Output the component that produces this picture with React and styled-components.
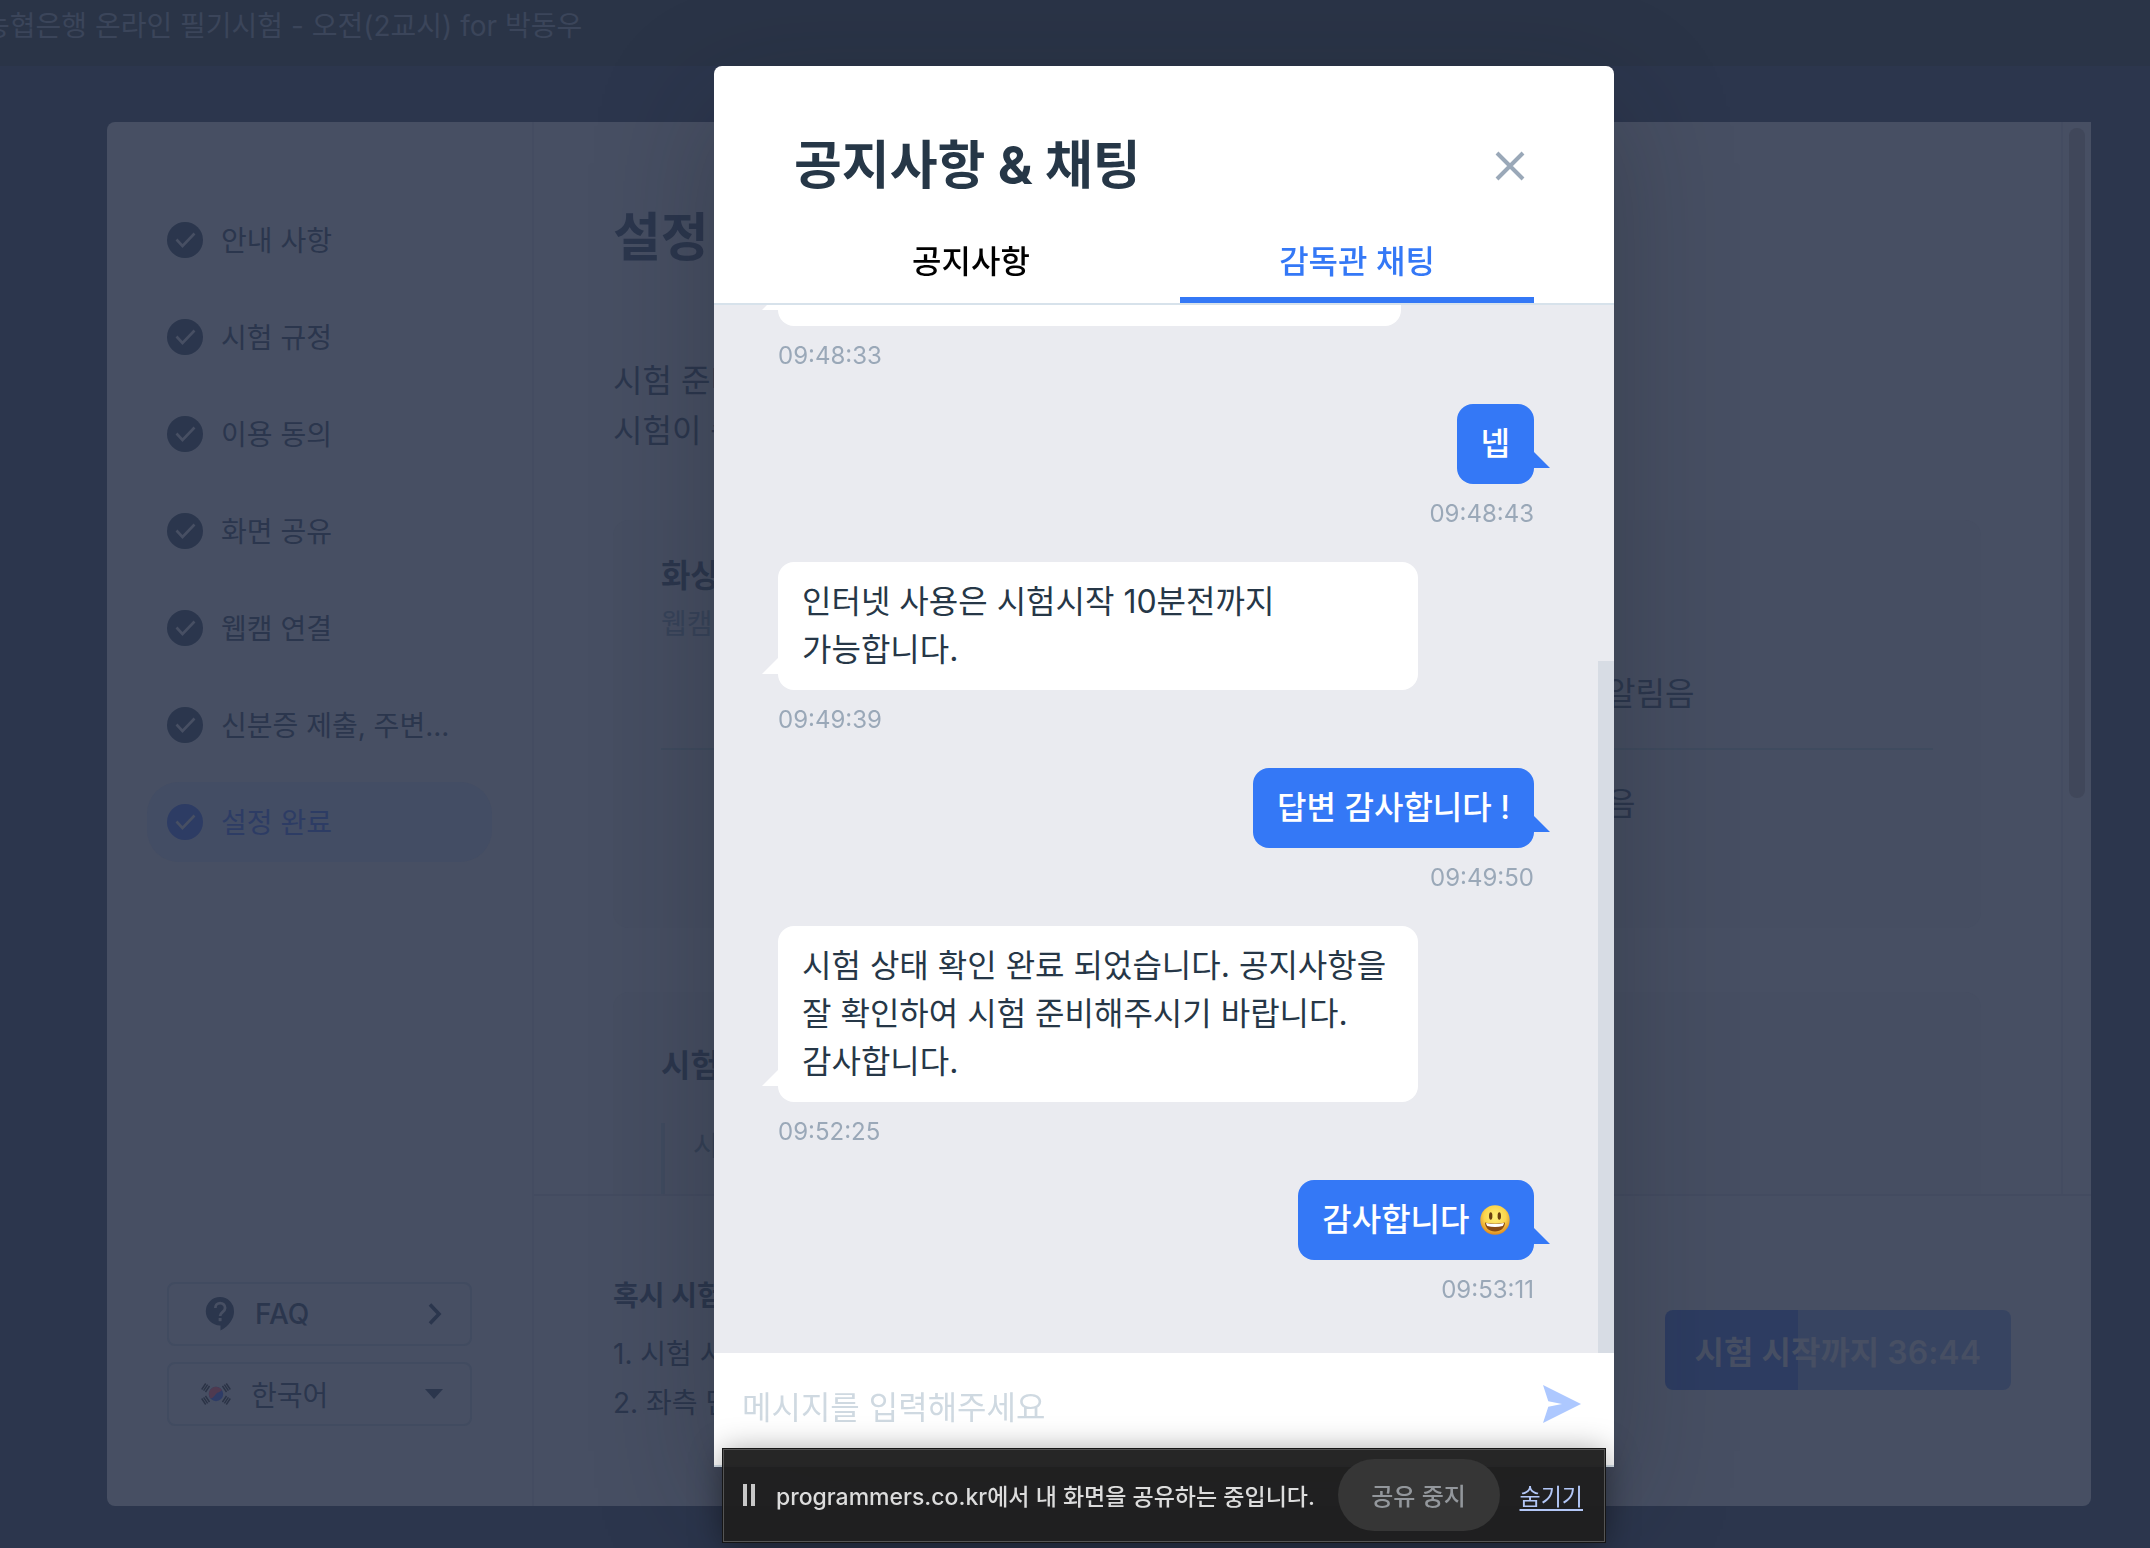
import React, { useState } from "react";
import styled, { createGlobalStyle } from "styled-components";

const steps = [
  "안내 사항",
  "시험 규정",
  "이용 동의",
  "화면 공유",
  "웹캠 연결",
  "신분증 제출, 주변...",
  "설정 완료",
];

const messages = [
  { id: 1, text: "", time: "09:48:33", minWidth: 623 },
  { id: 2, mine: true, text: "넵", time: "09:48:43" },
  {
    id: 3,
    text: "인터넷 사용은 시험시작 10분전까지 가능합니다.",
    time: "09:49:39",
  },
  { id: 4, mine: true, text: "답변 감사합니다 !", time: "09:49:50" },
  {
    id: 5,
    text: "시험 상태 확인 완료 되었습니다. 공지사항을 잘 확인하여 시험 준비해주시기 바랍니다. 감사합니다.",
    time: "09:52:25",
  },
  { id: 6, mine: true, text: "감사합니다 ", smile: true, time: "09:53:11" },
];

const CheckIcon = () => (
  <svg width="36" height="36" viewBox="0 0 36 36" aria-hidden="true">
    <circle cx="18" cy="18" r="18" fill="currentColor" />
    <path
      d="M9.5 17.5l6 6.5L27.5 11.5"
      fill="none"
      stroke="#474f63"
      strokeWidth="2.6"
    />
  </svg>
);

const FaqIcon = () => (
  <svg width="30" height="36" viewBox="0 0 30 36" aria-hidden="true">
    <path
      d="M15 1a14 14 0 0 1 14 14.2c0 8-5 14.500-13.500 19.300V29.400H15A14.200 14.200 0 0 1 15 1z"
      fill="#2b364d"
    />
    <path
      d="M10.300 12c0-6.500 9.800-6.500 9.800 0 0 4-5 4.300-5 8"
      fill="none"
      stroke="#474f63"
      strokeWidth="2.800"
    />
    <rect x="13.600" y="22" width="3" height="3.200" fill="#474f63" />
  </svg>
);

const FlagIcon = () => (
  <svg width="30" height="24" viewBox="0 0 30 24" aria-hidden="true">
    <circle cx="15" cy="12" r="7.200" fill="#2e3c66" />
    <path
      d="M9 16A7.200 7.200 0 0 1 21 8c-1.800 2.400-4.300 2-6 4s-4 5.500-6 4z"
      fill="#4f3a50"
    />
    <g stroke="#2b3346" strokeWidth="1.400">
      <path d="M.7 7.500l4-6M2.600 8.700l4-6M4.500 10l4-6" />
      <path d="M29.300 7.500l-4-6M27.400 8.700l-4-6M25.500 10l-4-6" />
      <path d="M.7 16.500l4 6M2.600 15.300l4 6M4.500 14l4 6" />
      <path d="M29.300 16.500l-4 6M27.400 15.300l-4 6M25.500 14l-4 6" />
    </g>
  </svg>
);

const SmileIcon = () => (
  <svg width="32" height="32" viewBox="-2 -1 32 32" role="img" aria-label="웃는 얼굴">
    <defs>
      <radialGradient id="face" cx="50%" cy="38%" r="62%">
        <stop offset="0" stopColor="#fff07a" />
        <stop offset="0.600" stopColor="#fbd54c" />
        <stop offset="1" stopColor="#e08a1e" />
      </radialGradient>
    </defs>
    <circle cx="15" cy="15" r="14.700" fill="url(#face)" />
    <ellipse cx="10.700" cy="11" rx="1.700" ry="3.800" fill="#6b3f10" />
    <ellipse cx="19.300" cy="11" rx="1.700" ry="3.800" fill="#6b3f10" />
    <path d="M5 17.500c6 1.500 14 1.500 20 0 0 5-4 9-10 9s-10-4-10-9z" fill="#8a4b14" />
    <path d="M6 18c6 1.300 12 1.300 18 0-.3 1.400-.8 2.300-1.300 3-5 1.200-10.400 1.200-15.400 0C6.800 20.300 6.300 19.400 6 18z" fill="#fff" />
  </svg>
);

const App = () => {
  const [tab, setTab] = useState("chat");
  const [message, setMessage] = useState("");

  return (
    <>
      <GlobalStyle />
      <Page>
        <TopBar>농협은행 온라인 필기시험 - 오전(2교시) for 박동우</TopBar>
        <Stage>
          <Card>
            <Sidebar>
              <StepList>
                {steps.map((step, index) => (
                  <Step key={step} $active={index === steps.length - 1}>
                    <CheckIcon />
                    <span>{step}</span>
                  </Step>
                ))}
              </StepList>
              <SideActions>
                <SideButton type="button" $bold>
                  <FaqIcon />
                  <span>FAQ</span>
                  <svg width="16" height="24" viewBox="0 0 16 24" aria-hidden="true">
                    <path
                      d="M3 2.500l9 9.500-9 9.500"
                      fill="none"
                      stroke="#2b364d"
                      strokeWidth="3.600"
                    />
                  </svg>
                </SideButton>
                <SideButton type="button">
                  <FlagIcon />
                  <span>한국어</span>
                  <svg width="18" height="10" viewBox="0 0 18 10" aria-hidden="true">
                    <path d="M0 0h18l-9 10z" fill="#2b364d" />
                  </svg>
                </SideButton>
              </SideActions>
            </Sidebar>

            <Main>
              <ScrollArea>
                <Content>
                  <PageTitle>설정</PageTitle>
                  <Lead>
                    시험 준비
                    <br />
                    시험이 종료
                  </Lead>
                  <Box>
                    <BoxTitle>화상</BoxTitle>
                    <BoxNote>웹캠</BoxNote>
                    <SoundRow>알림음</SoundRow>
                    <SoundRow>음</SoundRow>
                  </Box>
                  <Box $roomy>
                    <BoxTitle>시험</BoxTitle>
                    <Quote>시</Quote>
                  </Box>
                </Content>
                <Gutter>
                  <GutterThumb />
                </Gutter>
              </ScrollArea>
              <Footer>
                <Help>
                  <h3>혹시 시험</h3>
                  <p>1. 시험 시</p>
                  <p>2. 좌측 단</p>
                </Help>
                <StartButton type="button">시험 시작까지 36:44</StartButton>
              </Footer>
            </Main>
          </Card>
        </Stage>
      </Page>

      <Overlay>
        <Modal role="dialog" aria-labelledby="chat-title">
          <ModalHeader>
            <TitleRow>
              <h2 id="chat-title">공지사항 &amp; 채팅</h2>
              <IconButton type="button" aria-label="닫기">
                <svg width="30" height="30" viewBox="0 0 30 30" aria-hidden="true">
                  <path
                    d="M2 2l26 26M28 2L2 28"
                    stroke="#9aa8b8"
                    strokeWidth="4"
                  />
                </svg>
              </IconButton>
            </TitleRow>
            <Tabs>
              <Tab
                type="button"
                $active={tab === "notice"}
                onClick={() => setTab("notice")}
              >
                공지사항
              </Tab>
              <Tab
                type="button"
                $active={tab === "chat"}
                onClick={() => setTab("chat")}
              >
                감독관 채팅
              </Tab>
            </Tabs>
          </ModalHeader>
          <ChatArea>
            <Messages>
              {messages.map(({ id, mine, text, smile, time, minWidth }) => (
                <Message key={id} $mine={mine}>
                  <Bubble $mine={mine} style={{ minWidth }}>
                    {text}
                    {smile && <SmileIcon />}
                  </Bubble>
                  <time>{time}</time>
                </Message>
              ))}
            </Messages>
            <ChatTrack>
              <ChatThumb />
            </ChatTrack>
          </ChatArea>
          <Composer onSubmit={(e) => e.preventDefault()}>
            <input
              type="text"
              aria-label="메시지"
              placeholder="메시지를 입력해주세요"
              value={message}
              onChange={(e) => setMessage(e.target.value)}
            />
            <IconButton type="submit" aria-label="보내기">
              <svg width="38" height="38" viewBox="0 0 38 38" aria-hidden="true">
                <path d="M0 0l38 19L0 38l5.300-16.200L19 19 5.300 16.200z" fill="#adc8ff" />
              </svg>
            </IconButton>
          </Composer>
        </Modal>
      </Overlay>

      <ShareDock>
        <ShareBar>
          <PauseIcon />
          <ShareText>programmers.co.kr에서 내 화면을 공유하는 중입니다.</ShareText>
          <StopButton type="button">공유 중지</StopButton>
          <HideLink href="#hide">숨기기</HideLink>
        </ShareBar>
      </ShareDock>
    </>
  );
};

const GlobalStyle = createGlobalStyle`
  * {
    box-sizing: border-box;
  }
  body {
    margin: 0;
    background: #2c364d;
    color: #2b364d;
    font-family: Inter, "Noto Sans CJK KR", sans-serif;
    font-size: 28px;
  }
  h1, h2, h3, p, ul {
    margin: 0;
    padding: 0;
  }
  button, input {
    font: inherit;
    color: inherit;
    border: 0;
    padding: 0;
    background: none;
  }
  svg {
    display: block;
    flex: none;
  }
`;

const Page = styled.div`
  display: flex;
  flex-direction: column;
  height: 100vh;
  min-height: 1200px;
`;

const TopBar = styled.header`
  height: 66px;
  flex: none;
  margin-left: -16px;
  background: #2a3447;
  color: #3b455a;
  line-height: 52px;
  white-space: nowrap;
`;

const Stage = styled.div`
  flex: 1;
  min-height: 0;
  display: flex;
  padding: 56px 59px 42px 107px;
`;

const Card = styled.div`
  flex: 1;
  display: flex;
  min-width: 0;
  background: #474f63;
  border-radius: 8px 0 8px 8px;
`;

const Sidebar = styled.aside`
  width: 427px;
  flex: none;
  display: flex;
  flex-direction: column;
  justify-content: space-between;
  padding: 78px 40px 80px;
  border-right: 2px solid #444c61;
`;

const StepList = styled.ul`
  display: flex;
  flex-direction: column;
  gap: 17px;
  list-style: none;
`;

const Step = styled.li`
  display: flex;
  align-items: center;
  gap: 18px;
  height: 80px;
  padding: 0 36px 0 20px;
  border-radius: 32px;
  color: ${({ $active }) => ($active ? "#2d3c64" : "#2b364d")};
  background: ${({ $active }) => ($active ? "#434d64" : "transparent")};

  span {
    padding-top: 2px;
    white-space: nowrap;
    line-height: 40px;
  }
`;

const SideActions = styled.div`
  display: flex;
  flex-direction: column;
  gap: 16px;
  padding: 0 20px;
`;

const SideButton = styled.button`
  display: flex;
  align-items: center;
  height: 64px;
  padding: 0 27px 0 ${({ $bold }) => ($bold ? "36px" : "32px")};
  border: 2px solid #414b60;
  border-radius: 8px;
  font-weight: ${({ $bold }) => ($bold ? 500 : 400)};

  span {
    flex: 1;
    padding-left: 20px;
    text-align: left;
  }
`;

const Main = styled.main`
  flex: 1;
  min-width: 0;
  display: flex;
  flex-direction: column;
`;

const ScrollArea = styled.div`
  flex: 1;
  min-height: 0;
  display: flex;
  overflow: hidden;
`;

const Content = styled.div`
  flex: 1;
  padding: 80px 80px 0 79px;
`;

const Gutter = styled.div`
  width: 30px;
  padding: 6px;
  border-left: 2px solid #444c61;
`;

const GutterThumb = styled.div`
  width: 16px;
  height: 670px;
  border-radius: 8px;
  background: #40475a;
`;

const PageTitle = styled.h1`
  font-size: 52px;
  line-height: 72px;
`;

const Lead = styled.p`
  margin: 82px 0 64px;
  font-size: 32px;
  line-height: 50px;
`;

const Box = styled.section`
  padding: ${({ $roomy }) => ($roomy ? "50px 48px 48px" : "32px 48px 70px")};
  margin-bottom: 64px;
  border-radius: 16px;
  background: #464e62;
`;

const BoxTitle = styled.h2`
  font-size: 32px;
  line-height: 48px;
`;

const BoxNote = styled.p`
  margin-top: 8px;
  line-height: 32px;
  color: #37435a;
`;

const SoundRow = styled.div`
  padding: 30px 0 30px 945px;
  font-size: 32px;
  line-height: 48px;
  white-space: nowrap;

  & + & {
    border-top: 2px solid #3f4b5f;
  }
`;

const Quote = styled.blockquote`
  margin: 33px 0 0;
  padding: 0 28px;
  border-left: 4px solid #404b60;
  line-height: 46px;
  color: #344056;
  min-height: 120px;
`;

const Footer = styled.footer`
  display: flex;
  align-items: center;
  justify-content: space-between;
  height: 312px;
  padding: 0 80px 2px 79px;
  border-top: 2px solid #434b60;
`;

const Help = styled.div`
  padding-top: 4px;
  line-height: 49px;

  h3 {
    font-size: 28px;
    line-height: 40px;
    margin-bottom: 14px;
  }
`;

const StartButton = styled.button`
  height: 80px;
  padding: 0 30px;
  border-radius: 8px;
  background: linear-gradient(to right, #2d3c61 38.4%, #374461 38.4%);
  color: #474f63;
  font-size: 32px;
  font-weight: 600;
`;

const Overlay = styled.div`
  position: fixed;
  inset: 0;
  display: flex;
  justify-content: center;
  padding: 66px 0 81px 178px;
`;

const Modal = styled.section`
  width: 900px;
  display: flex;
  flex-direction: column;
  border-radius: 8px 8px 0 0;
  background: #fff;
  box-shadow: 0 40px 120px rgba(20, 24, 30, 0.28);
`;

const ModalHeader = styled.header`
  padding: 60px 80px 0;
  border-bottom: 2px solid #d7e2eb;
`;

const TitleRow = styled.div`
  display: flex;
  align-items: center;
  justify-content: space-between;
  height: 80px;
  padding-right: 9px;
  color: #263747;

  h2 {
    font-size: 52px;
    line-height: 80px;
  }
`;

const IconButton = styled.button`
  cursor: pointer;
`;

const Tabs = styled.nav`
  display: flex;
  gap: 32px;
  margin-top: 11px;
`;

const Tab = styled.button`
  flex: 1;
  height: 86px;
  padding-top: 3px;
  border-bottom: 6px solid ${({ $active }) => ($active ? "#3478f6" : "#fff")};
  color: ${({ $active }) => ($active ? "#3478f6" : "#000")};
  font-size: 32px;
  font-weight: 500;
  cursor: pointer;
`;

const ChatArea = styled.div`
  flex: 1;
  min-height: 0;
  display: flex;
  background: #eaebf0;
`;

const Messages = styled.div`
  flex: 1;
  display: flex;
  flex-direction: column;
  justify-content: flex-end;
  gap: 30px;
  padding: 0 64px 45px;
  overflow: hidden;
`;

const Message = styled.div`
  display: flex;
  flex-direction: column;
  align-items: ${({ $mine }) => ($mine ? "flex-end" : "flex-start")};

  time {
    margin-top: 12px;
    color: #9aa8b8;
    font-size: 24px;
    line-height: 36px;
  }
`;

const Bubble = styled.div`
  position: relative;
  display: ${({ $mine }) => ($mine ? "flex" : "block")};
  align-items: center;
  max-width: 640px;
  min-height: 80px;
  padding: 16px 24px;
  border-radius: 16px;
  background: ${({ $mine }) => ($mine ? "#3478f6" : "#fff")};
  color: ${({ $mine }) => ($mine ? "#fff" : "#263747")};
  font-size: 32px;
  font-weight: ${({ $mine }) => ($mine ? 500 : 400)};
  line-height: 48px;
  word-break: keep-all;
  white-space: pre-wrap;

  &::after {
    content: "";
    position: absolute;
    bottom: 16px;
    ${({ $mine }) => ($mine ? "left: 100%;" : "right: 100%;")}
    width: 16px;
    height: 16px;
    background: inherit;
    clip-path: ${({ $mine }) =>
      $mine
        ? "polygon(0 0, 100% 100%, 0 100%)"
        : "polygon(100% 0, 100% 100%, 0 100%)"};
  }
`;

const ChatTrack = styled.div`
  width: 16px;
  display: flex;
  align-items: flex-end;
`;

const ChatThumb = styled.div`
  width: 100%;
  height: 66%;
  background: #d7dce4;
`;

const Composer = styled.form`
  display: flex;
  align-items: center;
  height: 114px;
  padding: 0 33px 10px 28px;
  border-bottom: 2px solid #d7e2eb;

  input {
    flex: 1;
    padding-top: 8px;
    font-size: 32px;
    line-height: 48px;
    outline: none;
  }
  input::placeholder {
    color: #cfd9e1;
    opacity: 1;
  }
`;

const ShareDock = styled.div`
  position: fixed;
  inset: auto 0 5px 178px;
  display: flex;
  justify-content: center;
`;

const ShareBar = styled.div`
  display: flex;
  align-items: center;
  width: 884px;
  height: 95px;
  padding: 0 22px 2px 20px;
  border: 1px solid #151515;
  background: rgba(31, 31, 31, 0.97);
  box-shadow: inset 0 0 0 1px #555, 0 4px 32px rgba(0, 0, 0, 0.4);
  color: #dcdcdc;
  font-size: 23px;
`;

const PauseIcon = styled.span`
  width: 12px;
  height: 22px;
  border: solid #c8c8c8;
  border-width: 0 4px;
`;

const ShareText = styled.span`
  flex: 1;
  padding-left: 21px;
  font-weight: 500;
  white-space: nowrap;
`;

const StopButton = styled.button`
  width: 162px;
  height: 72px;
  margin-right: 20px;
  border-radius: 36px;
  background: #363636;
  color: #93979c;
  font-size: 24px;
  font-weight: 500;
`;

const HideLink = styled.a`
  color: #b3c7f7;
  text-underline-offset: 4px;
`;

export default App;
